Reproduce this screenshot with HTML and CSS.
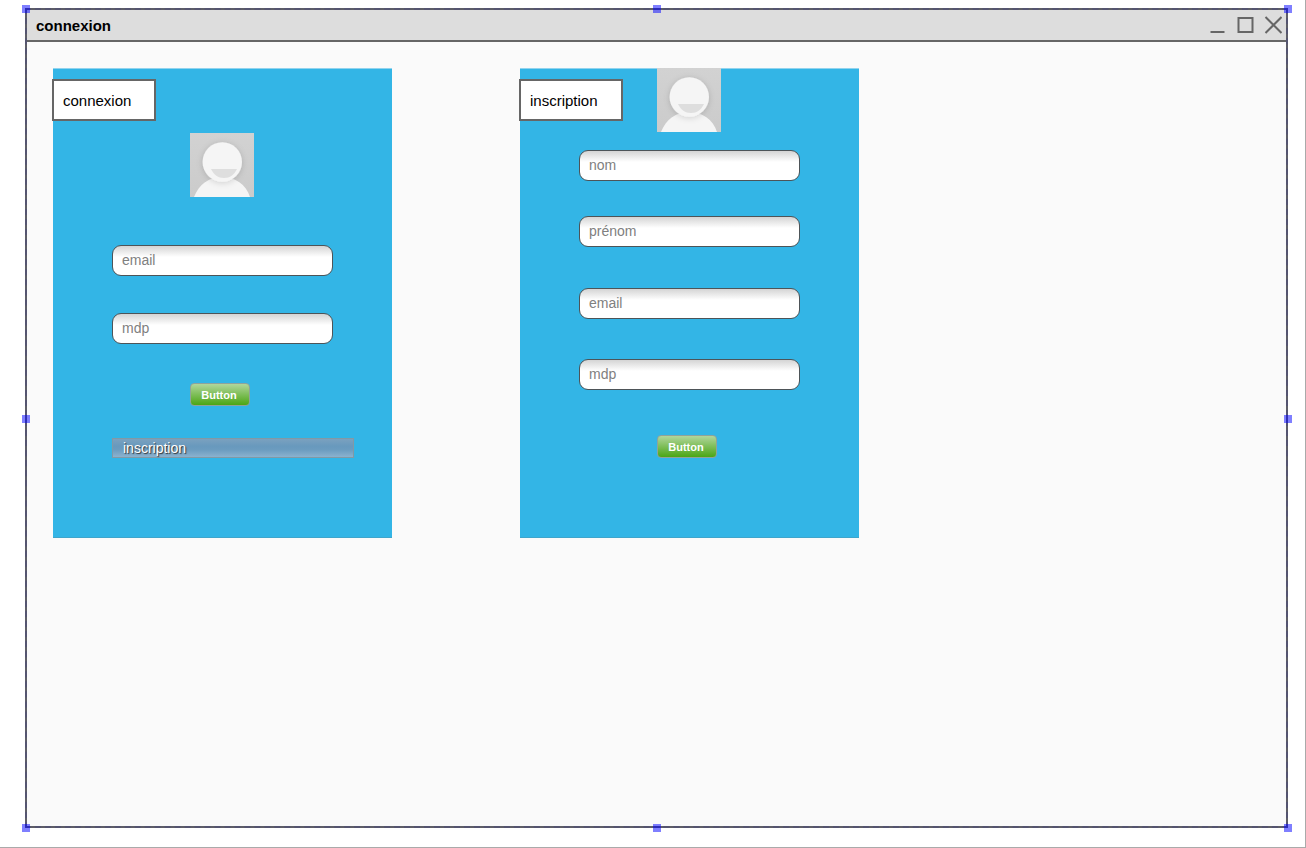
FILE: index.html
```html
<!DOCTYPE html>
<html lang="fr">
<head>
<meta charset="utf-8">
<title>connexion</title>
<link rel="stylesheet" href="styles.css">
</head>
<body>
<svg class="sprite" aria-hidden="true">
  <defs>
    <linearGradient id="avatar-bg" x1="0" y1="0" x2="0" y2="1">
      <stop offset="0" stop-color="#d2d2d2"/><stop offset="1" stop-color="#cbcbcb"/>
    </linearGradient>
    <filter id="avatar-shadow" x="-30%" y="-30%" width="160%" height="160%">
      <feDropShadow dx="0" dy="1" stdDeviation="3" flood-color="#000" flood-opacity=".16"/>
    </filter>
    <symbol id="avatar" viewBox="0 0 64 64">
      <rect width="64" height="64" fill="url(#avatar-bg)"/>
      <path d="M4 64C9 51 19 44 32 44s24 7 28 20z" fill="#f5f5f5"/>
      <circle cx="32.300" cy="29" r="19.700" fill="#f5f5f5" filter="url(#avatar-shadow)"/>
      <path d="M21 36h26c-3 6-7 9-13 9s-10-3-13-9z" fill="#dedede"/>
    </symbol>
  </defs>
</svg>
<div class="page">
  <main class="window">
    <header class="titlebar">
      <h1 class="title">connexion</h1>
      <div class="controls">
        <button class="control" type="button" aria-label="Minimize"><svg viewBox="0 0 18 18"><path d="M2.500 16h14"/></svg></button>
        <button class="control" type="button" aria-label="Maximize"><svg viewBox="0 0 18 18"><path d="M2.500 2h14v14h-14z"/></svg></button>
        <button class="control" type="button" aria-label="Close"><svg viewBox="0 0 18 18"><path d="M1.500 1l16 16M17.500 1l-16 16"/></svg></button>
      </div>
    </header>
    <div class="content">
      <form class="panel login">
        <h2 class="tag">connexion</h2>
        <svg class="avatar" role="img" aria-label="Avatar"><use href="#avatar"/></svg>
        <div class="fields">
          <input class="field" type="text" placeholder="email" aria-label="email">
          <input class="field" type="text" placeholder="mdp" aria-label="mdp">
        </div>
        <button class="submit" type="button">Button</button>
        <a class="link" href="#inscription">inscription</a>
      </form>
      <form class="panel signup" id="inscription">
        <h2 class="tag">inscription</h2>
        <svg class="avatar" role="img" aria-label="Avatar"><use href="#avatar"/></svg>
        <div class="fields identity">
          <input class="field" type="text" placeholder="nom" aria-label="nom">
          <input class="field" type="text" placeholder="prénom" aria-label="prénom">
        </div>
        <div class="fields credentials">
          <input class="field" type="text" placeholder="email" aria-label="email">
          <input class="field" type="text" placeholder="mdp" aria-label="mdp">
        </div>
        <button class="submit" type="button">Button</button>
      </form>
    </div>
    <div class="selection" aria-hidden="true">
      <i class="handle top left"></i><i class="handle top center"></i><i class="handle top right"></i>
      <i class="handle middle left"></i><i class="handle middle right"></i>
      <i class="handle bottom left"></i><i class="handle bottom center"></i><i class="handle bottom right"></i>
    </div>
  </main>
</div>
</body>
</html>
```
FILE: styles.css
```css
* { box-sizing: border-box; }

body {
  margin: 0;
  background: #fff;
  color: #000;
  font-family: "Liberation Sans", Arial, sans-serif;
}

.sprite { position: absolute; width: 0; height: 0; }

.page {
  display: flex;
  min-height: 100vh;
  padding: 8px 17px 19px 25px;
  border: solid #aaa;
  border-width: 0 1px 1px 0;
}

.window {
  position: relative;
  display: flex;
  flex: 1;
  flex-direction: column;
  border: 2px solid #5e5e66;
  background: #fafafa;
}

.titlebar {
  display: flex;
  align-items: center;
  justify-content: space-between;
  height: 32px;
  padding: 0 4px 0 9px;
  border-bottom: 2px solid #666;
  background: #ddd;
}

.title { margin: 0; padding-top: 2px; font-size: 15px; line-height: 18px; }

.controls { display: flex; gap: 10px; }

.control {
  width: 18px;
  height: 18px;
  padding: 0;
  border: 0;
  background: none;
}

.control svg {
  display: block;
  fill: none;
  stroke: #666;
  stroke-width: 2;
}

.content {
  display: flex;
  flex: 1;
  align-items: flex-start;
  gap: 128px;
  padding: 26px;
}

.panel {
  position: relative;
  display: flex;
  flex: 0 1 339px;
  flex-direction: column;
  align-items: flex-start;
  min-height: 470px;
  padding: 0 38px 80px 59px;
  border: solid #90d3ee;
  border-width: 1px 0 0;
  background: #33b5e6;
  box-shadow: inset 0 -1px #3fa5cb;
}

.login { padding-top: 64px; }

.tag {
  position: absolute;
  top: 10px;
  left: -1px;
  width: 104px;
  margin: 0;
  padding: 11px 9px 9px;
  border: 2px solid #666;
  background: #fff;
  font-size: 15px;
  font-weight: 400;
  line-height: 18px;
}

.avatar { width: 64px; height: 64px; margin-left: 78px; }

.fields {
  display: flex;
  flex-direction: column;
  gap: 37px;
  width: 221px;
  margin: 48px 0 39px;
}

.signup .avatar { margin-top: -1px; }
.signup .identity { gap: 35px; margin: 18px 0 41px; }
.signup .credentials { gap: 40px; margin: 0 0 45px; }

.field {
  width: 100%;
  height: 31px;
  padding: 0 9px 2px;
  border: 1px solid #4d5458;
  border-radius: 9px;
  background: linear-gradient(#d4d4d4, #fff 11px);
  font-family: inherit;
  font-size: 14px;
}

.field::placeholder { color: #808080; opacity: 1; }

.submit {
  width: 60px;
  height: 23px;
  margin-left: 78px;
  padding: 0 2px 0 0;
  border: 1px solid #8fa39a;
  border-radius: 4px;
  background: linear-gradient(#b1d69c, #4ba614);
  color: #fff;
  font-family: inherit;
  font-size: 11px;
  font-weight: 700;
}

.link {
  width: 100%;
  margin-top: 32px;
  padding: 0 10px;
  border: 1px solid #8299a5;
  background: linear-gradient(#7ba1bf, #6899bd 40%, #6c9cbf 60%, #8bb2cf);
  color: #fff;
  font-size: 14px;
  line-height: 18px;
  text-decoration: none;
  text-shadow: 1px 1px 1px #333;
}

.selection {
  position: absolute;
  inset: -2px;
  border: 2px dashed #545470;
  pointer-events: none;
}

.handle {
  position: absolute;
  width: 8px;
  height: 8px;
  background: rgba(0, 0, 255, .5);
}

.top { top: -5px; }
.middle { top: calc(50% - 3px); }
.bottom { bottom: -6px; }
.left { left: -5px; }
.center { left: calc(50% - 4px); }
.right { right: -6px; }
```
